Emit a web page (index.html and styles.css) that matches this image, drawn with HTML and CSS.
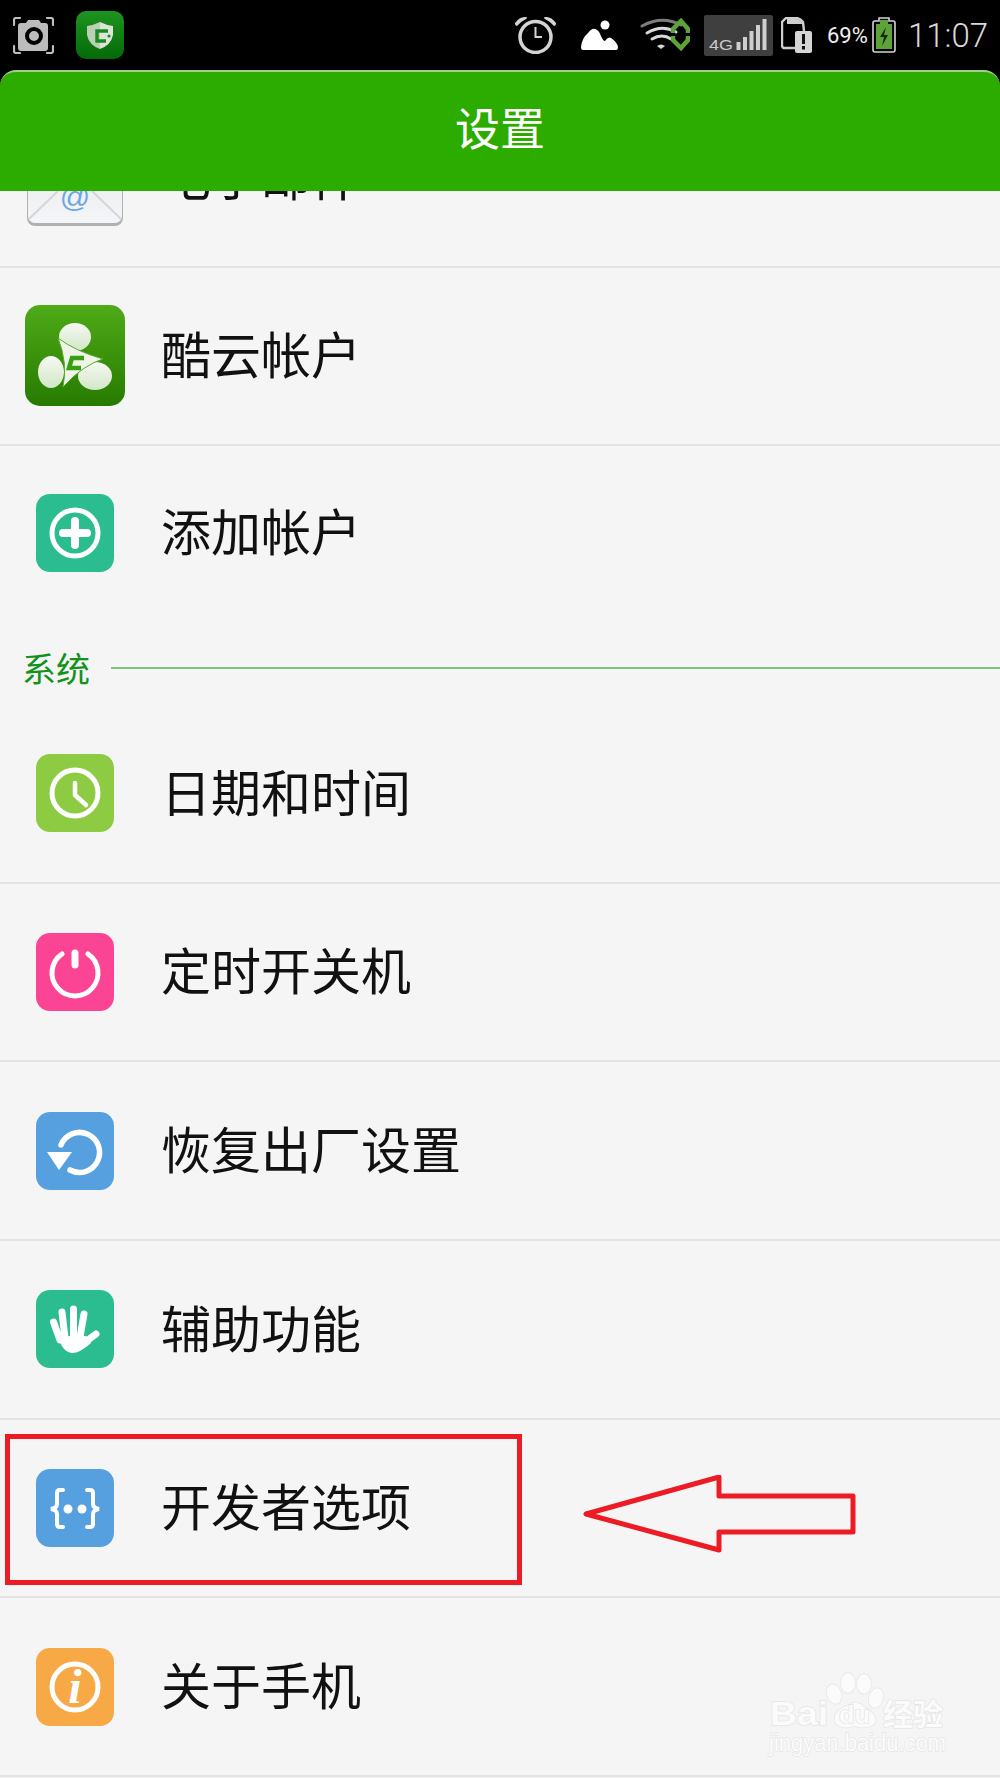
FILE: index.html
```html
<!DOCTYPE html>
<html lang="zh-CN">

<head>
    <meta charset="UTF-8">
    <meta name="viewport" content="width=device-width, initial-scale=1.0">
    <title>设置</title>
    <link rel="stylesheet" href="styles.css">
</head>

<body>
    <div class="page">
        <div class="top">
            <div class="status-bar">
                <svg class="ic-camera" width="41" height="37" viewBox="0 0 41 37">
                    <path d="M1 8V3Q1 1 3 1H7M34 1H38Q40 1 40 3V8M1 29V34Q1 36 3 36H7M34 36H38Q40 36 40 34V29" fill="none" stroke="#bdbdbd" stroke-width="2.2" stroke-linecap="round"/>
                    <path d="M8 6H13L15 3H26L28 6H32Q35 6 35 9V31Q35 34 32 34H8Q5 34 5 31V9Q5 6 8 6Z" fill="#bcbcbc"/>
                    <circle cx="21" cy="19" r="7" fill="#bcbcbc" stroke="#000" stroke-width="4"/>
                </svg>
                <svg class="ic-guard" width="48" height="48" viewBox="0 0 48 48">
                    <defs>
                        <linearGradient id="guardBg" x1="0" y1="0" x2="0" y2="1">
                            <stop offset="0" stop-color="#1d9420"/>
                            <stop offset="1" stop-color="#046a08"/>
                        </linearGradient>
                    </defs>
                    <rect width="48" height="48" rx="10" fill="url(#guardBg)"/>
                    <path d="M11 15Q18 14 24 11V38Q13 34 11 24Z" fill="#bcd0b8"/>
                    <path d="M37 15Q30 14 24 11V38Q35 34 37 24Z" fill="#dde4da"/>
                    <path d="M32 20H21V30H30" fill="none" stroke="#1a8a1e" stroke-width="3.4"/>
                    <circle cx="33" cy="25" r="1.6" fill="#1a8a1e"/>
                </svg>

                <svg class="ic-alarm" width="41" height="38" viewBox="0 0 41 38">
                    <circle cx="20.5" cy="21" r="15.5" fill="none" stroke="#d4d4d4" stroke-width="3.5"/>
                    <path d="M20.5 11V21H27" fill="none" stroke="#d4d4d4" stroke-width="2"/>
                    <path d="M0 7Q5 0 11 1Q13 2 11 3Q5 6 2 10Q0 10 0 7ZM41 7Q36 0 30 1Q28 2 30 3Q36 6 39 10Q41 10 41 7Z" fill="#d4d4d4"/>
                </svg>
                <svg class="ic-picture" width="37" height="30" viewBox="0 0 37 30">
                    <circle cx="24" cy="5" r="4.5" fill="#fff"/>
                    <path d="M0 27Q1 18 7 13Q11 8 14 9Q18 10 20 16Q22 21 24 21Q27 16 30 18Q36 22 37 27Q37 30 35 30H2Q0 30 0 27Z" fill="#fff"/>
                </svg>
                <svg class="ic-wifi" width="50" height="34" viewBox="0 0 50 34">
                    <path d="M2 8Q22 -3 41 7" fill="none" stroke="#7c7c7c" stroke-width="3" stroke-linecap="round"/>
                    <path d="M7 15Q22 6 36 14M12 21Q22 15 31 21" fill="none" stroke="#d8d8d8" stroke-width="3" stroke-linecap="round"/>
                    <path d="M17 28Q21 25 25 28L21 31Z" fill="#d8d8d8"/>
                    <path d="M33 15V11L41 3L48 11V15M33 18V22L41 30L48 22V18" fill="none" stroke="#5ea33a" stroke-width="4.5"/>
                </svg>
                <svg class="ic-signal" width="69" height="41" viewBox="0 0 69 41">
                    <rect width="69" height="41" rx="2" fill="#3f3f3f"/>
                    <text x="5" y="35" font-family="Liberation Sans" font-size="15" fill="#c9c9c9" textLength="24" lengthAdjust="spacingAndGlyphs">4G</text>
                    <path d="M34.500 35V27M41 35V22M47.500 35V16M54 35V10M60.500 35V4" fill="none" stroke="#cfcfcf" stroke-width="4"/>
                </svg>
                <svg class="ic-sim" width="31" height="36" viewBox="0 0 31 36">
                    <path d="M14 31H4Q1 31 1 28V5L5 1H15Q19 1 22 5L23 14" fill="none" stroke="#cfcfcf" stroke-width="2.4"/>
                    <path d="M6 2H15Q19 2 22 7H6Z" fill="#cfcfcf"/>
                    <rect x="14" y="14" width="17" height="22" rx="2" fill="#d6d6d6"/>
                    <path d="M22.500 17V27M22.500 29V32.500" stroke="#111" stroke-width="3"/>
                </svg>
                <span class="battery-text">69%</span>
                <svg class="ic-battery" width="24" height="36" viewBox="0 0 24 36">
                    <path d="M7 4V1H17V4H21Q23 4 23 6V33Q23 35 21 35H3Q1 35 1 33V6Q1 4 3 4Z" fill="#000" stroke="#d4d4d4" stroke-width="1.600"/>
                    <rect x="4" y="7" width="16" height="25" fill="#5ea33a"/>
                    <rect x="8" y="3" width="8" height="4" fill="#5ea33a"/>
                    <path d="M14 10L8 20H12L10 29L16 18H12Z" fill="#1a2a10"/>
                </svg>
                <span class="clock">11:07</span>
            </div>
            <header class="title-bar">设置</header>
        </div>

        <main class="settings">
            <div class="row">
                <div class="icon-slot">
                    <svg width="98" height="100" viewBox="0 0 98 100">
                        <defs>
                            <linearGradient id="mailBg" x1="0" y1="0" x2="0" y2="1">
                                <stop offset="0" stop-color="#e6e6e6"/>
                                <stop offset="1" stop-color="#f3f5f8"/>
                            </linearGradient>
                        </defs>
                        <rect x="1" y="1" width="96" height="98" rx="8" fill="#b0b0b0"/>
                        <rect x="2" y="2" width="94" height="94" rx="7" fill="url(#mailBg)"/>
                        <path d="M3 92L34 62M95 92L64 62" fill="none" stroke="#d4d6d8" stroke-width="2"/>
                        <text x="49" y="80" text-anchor="middle" font-family="Liberation Sans" font-size="30" fill="#6ea6e2">@</text>
                    </svg>
                </div>
                <span class="row-text">电子邮件</span>
            </div>
            <div class="row">
                <div class="icon-slot">
                    <svg width="100" height="101" viewBox="0 0 100 101">
                        <defs>
                            <linearGradient id="coolBg" x1="0" y1="0" x2="0" y2="1">
                                <stop offset="0" stop-color="#4fab18"/>
                                <stop offset="1" stop-color="#277a00"/>
                            </linearGradient>
                            <linearGradient id="ball" x1="0" y1="0" x2="0" y2="1">
                                <stop offset="0" stop-color="#f6f9f3"/>
                                <stop offset="1" stop-color="#d2e7c6"/>
                            </linearGradient>
                        </defs>
                        <rect width="100" height="101" rx="15" fill="url(#coolBg)"/>
                        <ellipse cx="50" cy="32" rx="16" ry="14" fill="url(#ball)"/>
                        <ellipse cx="26" cy="67" rx="13" ry="16" fill="url(#ball)"/>
                        <ellipse cx="70" cy="71" rx="17" ry="14" fill="url(#ball)"/>
                        <path d="M33 33Q50 46 78 54Q58 60 38 82Q43 58 33 33Z" fill="#eef5e8" stroke="#5aa830" stroke-width="1" stroke-linejoin="round"/>
                        <path d="M59 53H47L44 63H56" fill="none" stroke="#37a010" stroke-width="4.500"/>
                    </svg>
                </div>
                <span class="row-text">酷云帐户</span>
            </div>
            <div class="row row-last">
                <div class="icon-slot">
                    <div class="tile tile-teal">
                        <svg width="78" height="78" viewBox="0 0 78 78">
                            <circle cx="39" cy="39" r="23" fill="none" stroke="#fff" stroke-width="5"/>
                            <path d="M27 39H51M39 27V51" stroke="#fff" stroke-width="8" stroke-linecap="round"/>
                        </svg>
                    </div>
                </div>
                <span class="row-text">添加帐户</span>
            </div>

            <div class="section-head">
                <span class="section-name">系统</span>
                <span class="section-line"></span>
            </div>

            <div class="row">
                <div class="icon-slot">
                    <div class="tile tile-lime">
                        <svg width="78" height="78" viewBox="0 0 78 78">
                            <circle cx="39" cy="39" r="23" fill="none" stroke="#fff" stroke-width="5"/>
                            <path d="M39 29V41L50 51" fill="none" stroke="#fff" stroke-width="4.500" stroke-linecap="round" stroke-linejoin="round"/>
                        </svg>
                    </div>
                </div>
                <span class="row-text">日期和时间</span>
            </div>
            <div class="row">
                <div class="icon-slot">
                    <div class="tile tile-pink">
                        <svg width="78" height="78" viewBox="0 0 78 78">
                            <path d="M26 21A23 23 0 1 0 52 21" fill="none" stroke="#fff" stroke-width="5" stroke-linecap="round"/>
                            <path d="M39 20V32" stroke="#fff" stroke-width="7" stroke-linecap="round"/>
                        </svg>
                    </div>
                </div>
                <span class="row-text">定时开关机</span>
            </div>
            <div class="row">
                <div class="icon-slot">
                    <div class="tile tile-blue">
                        <svg width="78" height="78" viewBox="0 0 78 78">
                            <path d="M25 33A20 20 0 1 1 34 58" fill="none" stroke="#fff" stroke-width="5.500" stroke-linecap="round"/>
                            <path d="M11 40H36L23 58Z" fill="#fff"/>
                        </svg>
                    </div>
                </div>
                <span class="row-text">恢复出厂设置</span>
            </div>
            <div class="row">
                <div class="icon-slot">
                    <div class="tile tile-teal">
                        <svg width="78" height="78" viewBox="0 0 78 78">
                            <path d="M17.500 32L24 50M26 22L29 48M37.500 19V47M48 24L44 47M60 44L48 53" stroke="#fff" stroke-width="7" stroke-linecap="round"/>
                            <path d="M22 46L50 46L55 53Q44 63 36 63Q26 62 22 46Z" fill="#fff"/>
                        </svg>
                    </div>
                </div>
                <span class="row-text">辅助功能</span>
            </div>
            <div class="row">
                <div class="icon-slot">
                    <div class="tile tile-blue">
                        <svg width="78" height="78" viewBox="0 0 78 78">
                            <path d="M27 21H24Q21 21 21 24V35Q21 39 15 40Q21 41 21 45V55Q21 58 24 58H27" fill="none" stroke="#fff" stroke-width="4" stroke-linecap="round"/>
                            <path d="M51 21H54Q57 21 57 24V35Q57 39 63 40Q57 41 57 45V55Q57 58 54 58H51" fill="none" stroke="#fff" stroke-width="4" stroke-linecap="round"/>
                            <circle cx="32" cy="40" r="4.500" fill="#fff"/>
                            <circle cx="46" cy="40" r="4.500" fill="#fff"/>
                        </svg>
                    </div>
                </div>
                <span class="row-text">开发者选项</span>
            </div>
            <div class="row">
                <div class="icon-slot">
                    <div class="tile tile-orange">
                        <svg width="78" height="78" viewBox="0 0 78 78">
                            <circle cx="39" cy="39" r="23" fill="none" stroke="#fff" stroke-width="5"/>
                            <text x="39" y="54.500" text-anchor="middle" font-family="Liberation Serif" font-weight="bold" font-style="italic" font-size="48" fill="#fff">i</text>
                        </svg>
                    </div>
                </div>
                <span class="row-text">关于手机</span>
            </div>
        </main>

        <!-- marcas encima de la captura -->
        <div class="mark-box"></div>
        <svg class="mark-arrow" width="280" height="85" viewBox="0 0 280 85">
            <path d="M3 39L136 2V21H270V57H136V75Z" fill="none" stroke="#ed1c24" stroke-width="5" stroke-linejoin="round"/>
        </svg>

        <svg class="watermark" width="210" height="100" viewBox="0 0 210 100">
            <g class="wm-shapes">
                <ellipse cx="70" cy="28" rx="7" ry="10" transform="rotate(-18 70 28)"/>
                <ellipse cx="84" cy="17" rx="7" ry="10"/>
                <ellipse cx="100" cy="18" rx="7" ry="10"/>
                <ellipse cx="112" cy="32" rx="7" ry="10" transform="rotate(18 112 32)"/>
                <path d="M72 58Q66 46 85 39Q92 33 100 41Q116 50 110 58Q102 64 90 60Q80 64 72 58Z"/>
                <text x="6" y="59" font-family="Liberation Sans" font-weight="bold" font-size="33" textLength="58" lengthAdjust="spacingAndGlyphs">Bai</text>
                <text x="75" y="57" font-family="Liberation Sans" font-weight="bold" font-size="24" textLength="31" lengthAdjust="spacingAndGlyphs">du</text>
                <text x="119" y="59" font-family="Noto Sans CJK SC" font-weight="bold" font-size="30">经验</text>
                <text x="5" y="85" font-family="Liberation Sans" font-size="23" textLength="177" lengthAdjust="spacingAndGlyphs">jingyan.baidu.com</text>
            </g>
        </svg>
    </div>
</body>

</html>
```

FILE: styles.css
```css
html, body {
    margin: 0;
    padding: 0;
    background-color: #f5f5f5;
}

.page {
    position: relative;
    width: 1000px;
    height: 1778px;
    overflow: hidden;
    font-family: "Noto Sans CJK SC", "Liberation Sans", sans-serif;
}

.top {
    position: relative;
    z-index: 2;
    background-color: #000;
}

.status-bar {
    display: flex;
    align-items: center;
    height: 70px;
    padding-left: 13px;
    color: #e0e0e0;
}

.ic-guard { margin-left: 22px; }
.ic-alarm { margin-left: 391px; }
.ic-picture { margin-left: 25px; }
.ic-wifi { margin-left: 22px; }
.ic-signal { margin-left: 14px; }
.ic-sim { margin-left: 8px; }
.ic-battery { margin-left: 5px; }

.battery-text {
    margin-left: 15px;
    font-family: Roboto, "Liberation Sans", sans-serif;
    font-size: 22px;
    width: 40px;
    color: #eee;
}

.clock {
    margin-left: 12px;
    font-family: Roboto, "Liberation Sans", sans-serif;
    font-weight: 300;
    font-size: 33px;
    color: #d8d8d8;
}

.title-bar {
    box-sizing: border-box;
    height: 121px;
    padding-top: 20px;
    border-top: 2px solid #9fd088;
    border-radius: 16px 16px 0 0;
    background-color: #2dac00;
    color: #fff;
    font-size: 45px;
    line-height: 70px;
    text-align: center;
}

.settings {
    margin-top: -102px;
}

.row {
    box-sizing: border-box;
    display: flex;
    align-items: center;
    height: 178.67px;
    border-bottom: 2px solid #e3e3e3;
}

.row-last {
    border-bottom: none;
    padding-bottom: 6px;
}

.icon-slot {
    display: flex;
    justify-content: center;
    align-items: center;
    width: 150px;
    flex-shrink: 0;
}

.icon-slot svg {
    display: block;
}

.tile {
    width: 78px;
    height: 78px;
    border-radius: 14px;
}

.tile-teal { background-color: #2bbc8f; }
.tile-lime { background-color: #8dcc42; }
.tile-pink { background-color: #fb4493; }
.tile-blue { background-color: #56a0e0; }
.tile-orange { background-color: #f7a945; }

.row-text {
    margin-left: 11px;
    margin-bottom: 7px;
    font-size: 50px;
    line-height: 60px;
    color: #111;
}

.section-head {
    box-sizing: border-box;
    display: flex;
    align-items: center;
    height: 80px;
    padding-left: 22px;
    padding-top: 7px;
}

.section-name {
    font-size: 34px;
    line-height: 40px;
    color: #12921a;
}

.section-line {
    flex: 1;
    height: 2px;
    margin-left: 21px;
    background-color: #7fc67c;
}

/* anotaciones */
.mark-box {
    position: absolute;
    left: 5px;
    top: 1434px;
    width: 507px;
    height: 141px;
    border: 5px solid #ed1c24;
}

.mark-arrow {
    position: absolute;
    left: 583px;
    top: 1475px;
}

.watermark {
    position: absolute;
    left: 764px;
    top: 1666px;
}

.wm-shapes {
    fill: #fbfbfb;
    stroke: #e6e6e6;
    stroke-width: 1.5px;
    paint-order: stroke;
}
```
